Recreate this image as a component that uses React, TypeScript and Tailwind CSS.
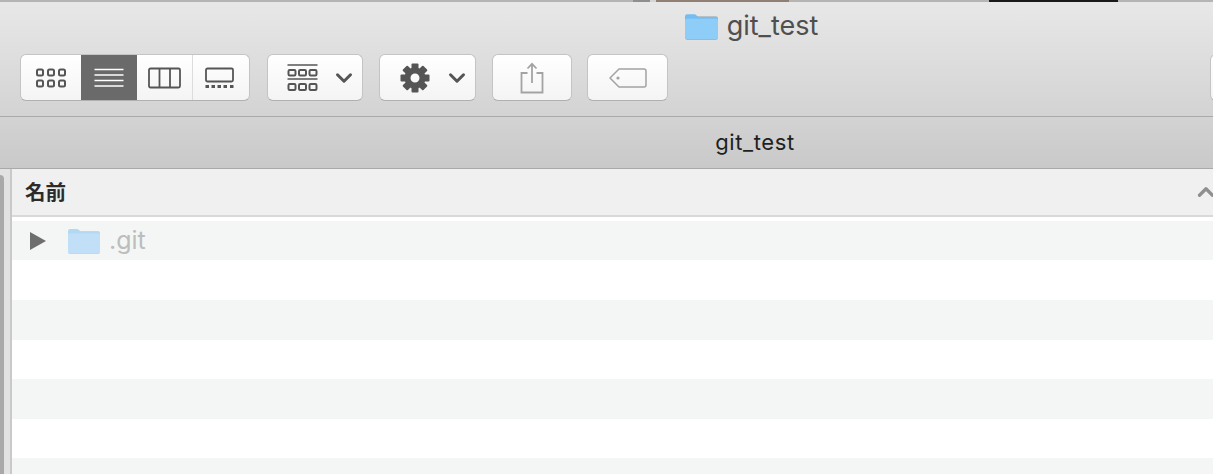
import { ChevronDown, ChevronUp } from 'lucide-react';

const sans = { fontFamily: 'Inter' };

function IconGrid() {
  return (
    <svg width="30" height="22" viewBox="0 0 30 22" fill="none" stroke="#555" strokeWidth="2">
      {[1, 12, 23].map((x) => (
        <g key={x}>
          <rect x={x} y="2.5" width="6" height="6" rx="1.5" />
          <rect x={x} y="13.5" width="6" height="6" rx="1.5" />
        </g>
      ))}
    </svg>
  );
}

function IconList() {
  return (
    <svg width="30" height="22" viewBox="0 0 30 22" stroke="#fff" strokeWidth="1.6">
      <path d="M0.5 2.5h29M0.5 8h29M0.5 13.5h29M0.5 19h29" />
    </svg>
  );
}

function IconColumns() {
  return (
    <svg width="34" height="22" viewBox="0 0 34 22" fill="none" stroke="#555" strokeWidth="1.8">
      <rect x="1" y="1.5" width="31" height="19" rx="1.5" />
      <path d="M11.5 1.5v19M22 1.5v19" />
    </svg>
  );
}

function IconGallery() {
  return (
    <svg width="30" height="22" viewBox="0 0 30 22" fill="none" stroke="#555" strokeWidth="1.8">
      <rect x="1" y="1.5" width="27" height="13" rx="1.5" />
      <path d="M0.5 19.5h3.5M6.5 19.5h3.5M12.5 19.5h3.5M18.5 19.5h3.5M25 19.5h3.5" strokeWidth="3.2" />
    </svg>
  );
}

function IconGroup() {
  return (
    <svg width="31" height="28" viewBox="0 0 31 28" fill="none" stroke="#555">
      <path d="M0.5 1h30M0.5 15h30" strokeWidth="1.5" />
      <g strokeWidth="2">
        {[1.5, 12, 22.5].map((x) => (
          <g key={x}>
            <rect x={x} y="6" width="7" height="5.5" rx="1.2" />
            <rect x={x} y="20" width="7" height="6" rx="1.2" />
          </g>
        ))}
      </g>
    </svg>
  );
}

function IconGear() {
  return (
    <svg width="30" height="30" viewBox="0 0 30 30">
      <g fill="#555">
        {[0, 45, 90, 135, 180, 225, 270, 315].map((deg) => (
          <rect key={deg} x="11.5" y="0.5" width="7" height="6" rx="1" transform={`rotate(${deg} 15 15)`} />
        ))}
      </g>
      <circle cx="15" cy="15" r="7.5" fill="none" stroke="#555" strokeWidth="6" />
    </svg>
  );
}

function IconShare() {
  return (
    <svg width="24" height="32" viewBox="0 0 24 32" fill="none" stroke="#a3a3a3" strokeWidth="1.8">
      <path d="M7.5 11H1.5v19.5h21V11h-6" />
      <path d="M12 21V1.8M7.5 6.5 12 1.8l4.5 4.7" />
    </svg>
  );
}

function IconTag() {
  return (
    <svg width="38" height="22" viewBox="0 0 38 22" fill="none" stroke="#a3a3a3" strokeWidth="1.5">
      <path d="M10 2h25a2 2 0 0 1 2 2v14a2 2 0 0 1-2 2H10L1 11z" strokeLinejoin="round" />
      <circle cx="9" cy="11" r="1.6" fill="#a3a3a3" stroke="none" />
    </svg>
  );
}

function Folder({ className }: { className: string }) {
  return (
    <svg className={className} width="32" height="26" viewBox="0 0 32 26">
      <rect x="0" y="3" width="32" height="23" rx="2" fill="#a9b4bd" />
      <path d="M0 3a2 2 0 0 1 2-2h7a3 3 0 0 1 2 1l2 2h17a2 2 0 0 1 2 2v17a2 2 0 0 1-2 2H2a2 2 0 0 1-2-2z" fill="#74bdf1" />
      <rect x="0" y="5.5" width="32" height="19.5" rx="1.5" fill="#8fcdf9" />
    </svg>
  );
}

const btn = 'h-[47px] bg-gradient-to-b from-white to-[#f4f4f4] rounded-[6px] border border-[#c4c4c4] border-b-[#b0b0b0] flex items-center';

export default function App() {
  return (
    <div className="w-[1213px] h-[474px] overflow-hidden flex flex-col bg-white" style={sans}>
      {/* Desktop behind the window */}
      <div className="h-[2px] shrink-0 flex bg-[#b5b5b5]">
        <div className="w-[633px]" />
        <div className="w-[17px] bg-[#8f8f8f]" />
        <div className="w-[6px] bg-[#d5d5d5]" />
        <div className="w-[133px] bg-[#8f8073]" />
        <div className="w-[200px]" />
        <div className="w-[129px] bg-[#1a1a1a]" />
      </div>

      {/* Toolbar */}
      <div className="h-[115px] shrink-0 bg-gradient-to-b from-[#e8e8e8] to-[#d3d3d3] border-b border-[#a9a9a9] flex flex-col">
        <div className="h-[45px] flex items-center justify-center gap-[9px] pl-[290px] pt-[3px]">
          <Folder className="w-[33px] h-[27px]" />
          <span className="text-[27px] leading-none text-[#4f4f4f] -mt-[1px]">git_test</span>
        </div>
        <div className="relative flex items-center pl-[20px] mt-[7px]">
          <div className={`${btn} w-[230px] overflow-hidden`}>
            <div className="w-[60px] h-full flex items-center justify-center"><IconGrid /></div>
            <div className="w-[56px] h-full bg-[#6a6a6a] flex items-center justify-center"><IconList /></div>
            <div className="w-[56px] h-full flex items-center justify-center border-r border-[#dcdcdc]"><IconColumns /></div>
            <div className="flex-1 h-full flex items-center justify-center pr-[3px]"><IconGallery /></div>
          </div>
          <div className={`${btn} w-[96px] ml-[17px] pl-[19px] gap-[13px]`}>
            <IconGroup />
            <ChevronDown size={26} strokeWidth={2.8} className="text-[#555]" />
          </div>
          <div className={`${btn} w-[97px] ml-[16px] pl-[20px] gap-[14px]`}>
            <IconGear />
            <ChevronDown size={26} strokeWidth={2.8} className="text-[#555]" />
          </div>
          <div className={`${btn} w-[80px] ml-[16px] justify-center`}>
            <IconShare />
          </div>
          <div className={`${btn} w-[81px] ml-[15px] justify-center`}>
            <IconTag />
          </div>
          <div className={`${btn} w-[10px] absolute left-[1210px] rounded-r-none`} />
        </div>
      </div>

      {/* Path bar */}
      <div className="h-[52px] shrink-0 bg-gradient-to-b from-[#d3d3d3] to-[#c9c9c9] border-b border-[#a9a9a9] flex items-center justify-center pl-[297px]">
        <span className="text-[22px] tracking-[0.6px] text-[#1f1f1f]">git_test</span>
      </div>

      <div className="flex-1 flex min-h-0">
        {/* Sidebar edge */}
        <div className="w-[12px] shrink-0 flex bg-[#e2e2e2]">
          <div className="w-[4px] bg-[#a9a9a9] rounded-tr-[4px] mt-[6px]" />
          <div className="w-[6px]" />
          <div className="w-[2px] bg-[#c9c9c9]" />
        </div>

        {/* File list */}
        <div className="flex-1 flex flex-col min-w-0">
          <div className="h-[48px] shrink-0 bg-[#f0f0f0] border-b-2 border-[#d9d9d9] flex items-center justify-between pl-[13px]">
            <span className="text-[20.5px] font-bold text-[#2b2b2b] -mt-[2px]" style={{ fontFamily: '"Noto Sans CJK JP", sans-serif' }}>名前</span>
            <ChevronUp size={26} strokeWidth={3} className="text-[#8f8f8f] -mr-[6px]" />
          </div>
          <div className="h-[4px] shrink-0 bg-white" />
          <div className="h-[39px] shrink-0 bg-[#f4f5f5] flex items-center pl-[18px]">
            <svg width="16" height="20" viewBox="0 0 16 20"><path d="M0 1l16 9-16 9z" fill="#6e6e6e" /></svg>
            <Folder className="ml-[22px] w-[32px] h-[26px] opacity-50" />
            <span className="ml-[9px] text-[25px] text-[#bdbdbd]">.git</span>
          </div>
          <div className="h-[40px] shrink-0 bg-white" />
          <div className="h-[40px] shrink-0 bg-[#f4f5f5]" />
          <div className="h-[39px] shrink-0 bg-white" />
          <div className="h-[40px] shrink-0 bg-[#f4f5f5]" />
          <div className="h-[39px] shrink-0 bg-white" />
          <div className="h-[40px] shrink-0 bg-[#f4f5f5]" />
        </div>
      </div>
    </div>
  );
}
